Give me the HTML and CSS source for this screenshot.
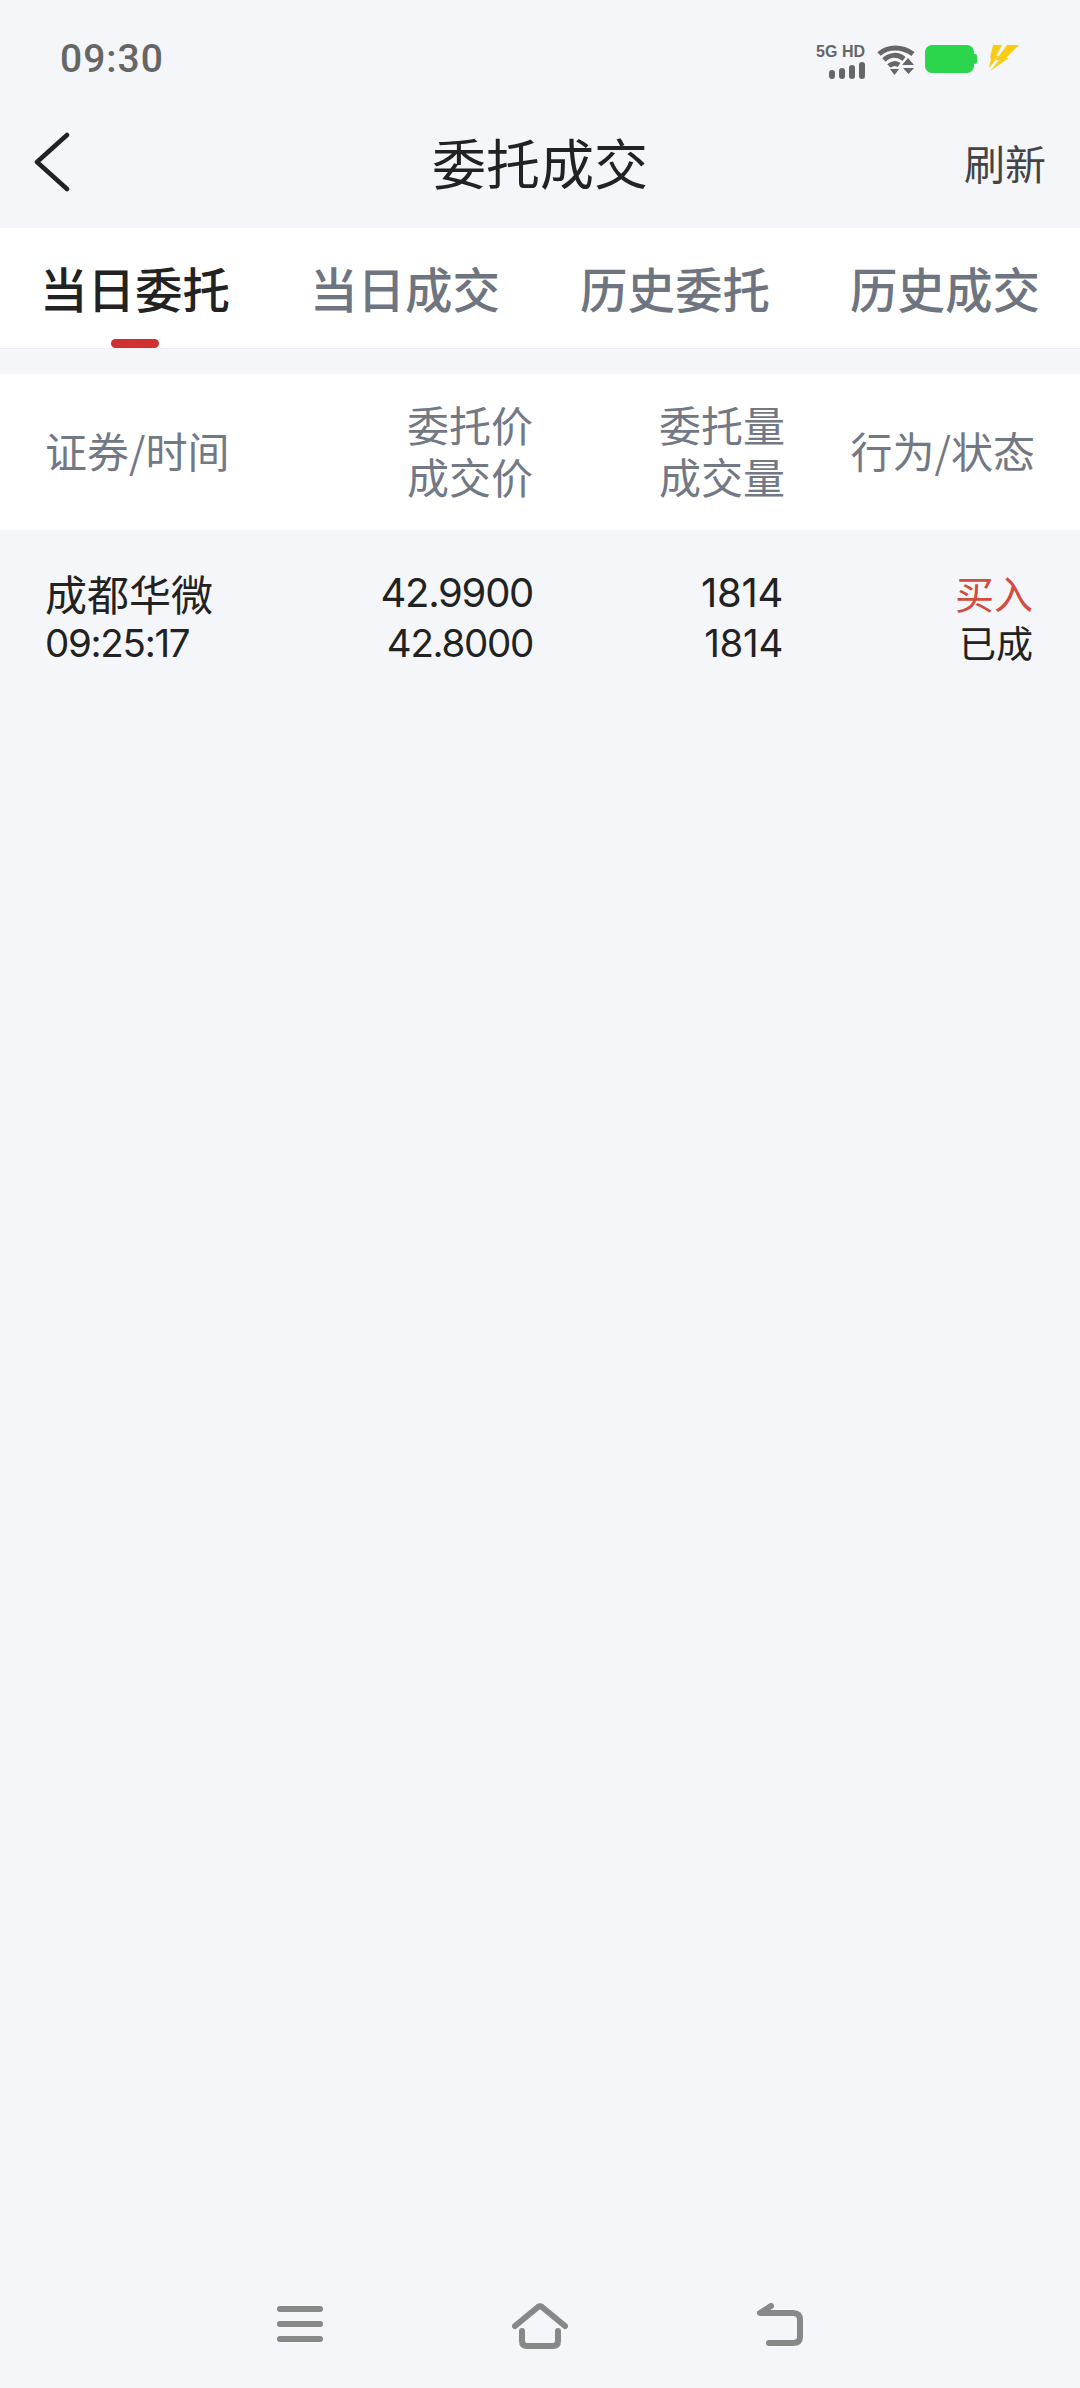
FILE: index.html
```html
<!DOCTYPE html>
<html lang="zh-CN">
  <head>
    <meta charset="UTF-8" />
    <meta name="viewport" content="width=device-width, initial-scale=1.0" />
    <title>委托成交</title>
    <link rel="stylesheet" href="styles.css">
  </head>
  <body>
    <div class="page">
      <div class="status_bar">
        <span class="clock">09:30</span>
        <div class="status_icons">
          <div class="net">
            <span class="net_text">5G HD</span>
            <svg class="bars" width="36" height="17" viewBox="0 0 36 17">
              <rect x="0" y="8" width="6" height="9" rx="3" />
              <rect x="10" y="6" width="6" height="11" rx="3" />
              <rect x="20" y="3" width="6" height="14" rx="3" />
              <rect x="30" y="0" width="6" height="17" rx="3" />
            </svg>
          </div>
          <svg class="wifi" width="38" height="30" viewBox="0 0 38 30">
            <path d="M2 9 C11 1 25 1 36 9" />
            <path d="M7 15 C13 9 21 9 27 14" />
            <path d="M12 21 C15 18 19 18 22 20" />
            <polygon class="fill" points="13,24 22,24 17.5,30" />
            <polygon class="fill" points="31,13 37,20 25,20" />
            <polygon class="fill" points="26,23 37,23 31.5,29" />
          </svg>
          <svg class="battery" width="52" height="28" viewBox="0 0 52 28">
            <rect x="0" y="0" width="49" height="28" rx="7" />
            <rect x="48" y="9" width="4" height="10" rx="2" />
          </svg>
          <svg class="bolt" width="31" height="27" viewBox="0 0 31 27">
            <polygon points="4,0 13,0 7,11 10,11 0,23 2,13 1,13" />
            <polygon points="18,0 30,0 17,13 20,13 1,26 10,15 7,15" />
          </svg>
        </div>
      </div>

      <div class="title_bar">
        <a class="back" href="#">
          <svg width="36" height="60" viewBox="0 0 36 60">
            <path d="M33 3 L3 30 L33 57" />
          </svg>
        </a>
        <h1 class="title">委托成交</h1>
        <a class="refresh" href="#">刷新</a>
      </div>

      <ul class="tabs">
        <li class="on">当日委托</li>
        <li>当日成交</li>
        <li>历史委托</li>
        <li>历史成交</li>
      </ul>

      <div class="list_head cols">
        <div class="col">证券/时间</div>
        <div class="col right">委托价<br />成交价</div>
        <div class="col right">委托量<br />成交量</div>
        <div class="col right">行为/状态</div>
      </div>

      <div class="list_row cols">
        <div class="col">
          <span class="name">成都华微</span>
          <span class="num small">09:25:17</span>
        </div>
        <div class="col right">
          <span class="num">42.9900</span>
          <span class="num small">42.8000</span>
        </div>
        <div class="col right">
          <span class="num qty">1814</span>
          <span class="num small qty">1814</span>
        </div>
        <div class="col right">
          <span class="state buy">买入</span>
          <span class="state done">已成</span>
        </div>
      </div>

      <div class="nav_bar">
        <svg width="46" height="42" viewBox="0 0 46 42">
          <path d="M3 6 H43 M3 21 H43 M3 36 H43" />
        </svg>
        <svg width="60" height="46" viewBox="0 0 60 46">
          <path d="M5 23 L28 4 Q30 2.500 32 4 L55 23" />
          <path d="M12 28 V38 Q12 43 17 43 H43 Q48 43 48 38 V28" />
        </svg>
        <svg width="46" height="44" viewBox="0 0 46 44">
          <path d="M14 3 L3 10 H36 Q43 10 43 17 V34 Q43 40 36 40 H12" />
        </svg>
      </div>
    </div>
  </body>
</html>
```

FILE: styles.css
```css
* {
  margin: 0;
  padding: 0;
  box-sizing: border-box;
}
html,
body {
  background: #f4f6fa;
}
li {
  list-style: none;
}
a {
  text-decoration: none;
  color: inherit;
}
.page {
  width: 1080px;
  height: 2388px;
  display: flex;
  flex-direction: column;
  font-family: "Noto Sans CJK SC", "Noto Sans", sans-serif;
  color: #222;
}

/* status bar */
.status_bar {
  height: 108px;
  padding: 37px 60px 0 60px;
  display: flex;
  justify-content: space-between;
  align-items: flex-start;
}
.clock {
  font-family: Roboto, sans-serif;
  font-weight: 500;
  font-size: 39px;
  line-height: 44px;
  letter-spacing: 1px;
  color: #666;
}
.status_icons {
  display: flex;
  align-items: flex-start;
  margin-top: 8px;
}
.net {
  width: 48px;
  margin-right: 12px;
  display: flex;
  flex-direction: column;
  align-items: flex-end;
}
.net_text {
  font-family: "Liberation Sans", sans-serif;
  font-weight: 700;
  font-size: 16px;
  line-height: 14px;
  color: #666;
  white-space: nowrap;
}
.bars {
  margin-top: 3px;
  fill: #666;
}
.wifi {
  margin: 0 10px 0 0;
}
.wifi path {
  fill: none;
  stroke: #666;
  stroke-width: 5;
}
.wifi .fill {
  fill: #666;
}
.battery {
  fill: #2bd64d;
  margin-right: 12px;
}
.bolt {
  fill: #f9cc13;
}

/* title */
.title_bar {
  height: 120px;
  padding: 0 34px 12px;
  display: flex;
  justify-content: space-between;
  align-items: center;
  position: relative;
}
.back svg {
  display: block;
  fill: none;
  stroke: #222;
  stroke-width: 4.5;
  stroke-linecap: round;
  stroke-linejoin: round;
}
.title {
  font-size: 54px;
  font-weight: 400;
  line-height: 72px;
  position: absolute;
  left: 0;
  right: 0;
  text-align: center;
}
.refresh {
  font-size: 41px;
  line-height: 56px;
  color: #444;
}

/* tabs */
.tabs {
  height: 121px;
  background: #fff;
  border-bottom: 1px solid #eceef1;
  display: flex;
}
.tabs li {
  flex: 1;
  text-align: center;
  font-size: 47.5px;
  font-weight: 500;
  line-height: 120px;
  color: #6f7580;
  position: relative;
}
.tabs li.on {
  color: #222;
}
.tabs li.on::after {
  content: "";
  position: absolute;
  left: 50%;
  bottom: 0;
  width: 48px;
  height: 9px;
  margin-left: -24px;
  border-radius: 5px;
  background: #d13033;
}

/* list */
.cols {
  display: grid;
  grid-template-columns: 244px 244px 252px 250px;
  padding: 0 46px 0 45px;
}
.list_head {
  margin-top: 25px;
  height: 156px;
  padding-bottom: 5px;
  background: #fff;
  align-items: center;
  font-size: 42px;
  line-height: 52px;
  color: #727985;
}
.right {
  text-align: right;
}
.list_row {
  padding-top: 38px;
  line-height: 50px;
  color: #222;
}
.list_row span {
  display: block;
  height: 50px;
}
.name {
  font-size: 42px;
}
.num {
  font-family: Inter, sans-serif;
  font-size: 40px;
  letter-spacing: -1.3px;
}
.num.small {
  font-size: 38.5px;
}
.num.qty {
  margin-right: 2px;
  letter-spacing: -0.3px;
}
.list_row .state {
  font-size: 39px;
  line-height: 48px;
  margin-right: 2px;
}
.list_row .done {
  font-size: 37px;
}
.buy {
  color: #d24d3e;
}

/* bottom nav */
.nav_bar {
  margin-top: auto;
  height: 90px;
  padding: 5px 0 0 277px;
  display: flex;
  align-items: flex-start;
}
.nav_bar svg {
  fill: none;
  stroke: #888;
  stroke-width: 6;
  stroke-linecap: round;
  stroke-linejoin: round;
}
.nav_bar svg:nth-child(2) {
  margin: 0 0 0 187px;
}
.nav_bar svg:nth-child(3) {
  margin: 0 0 0 187px;
}
```
